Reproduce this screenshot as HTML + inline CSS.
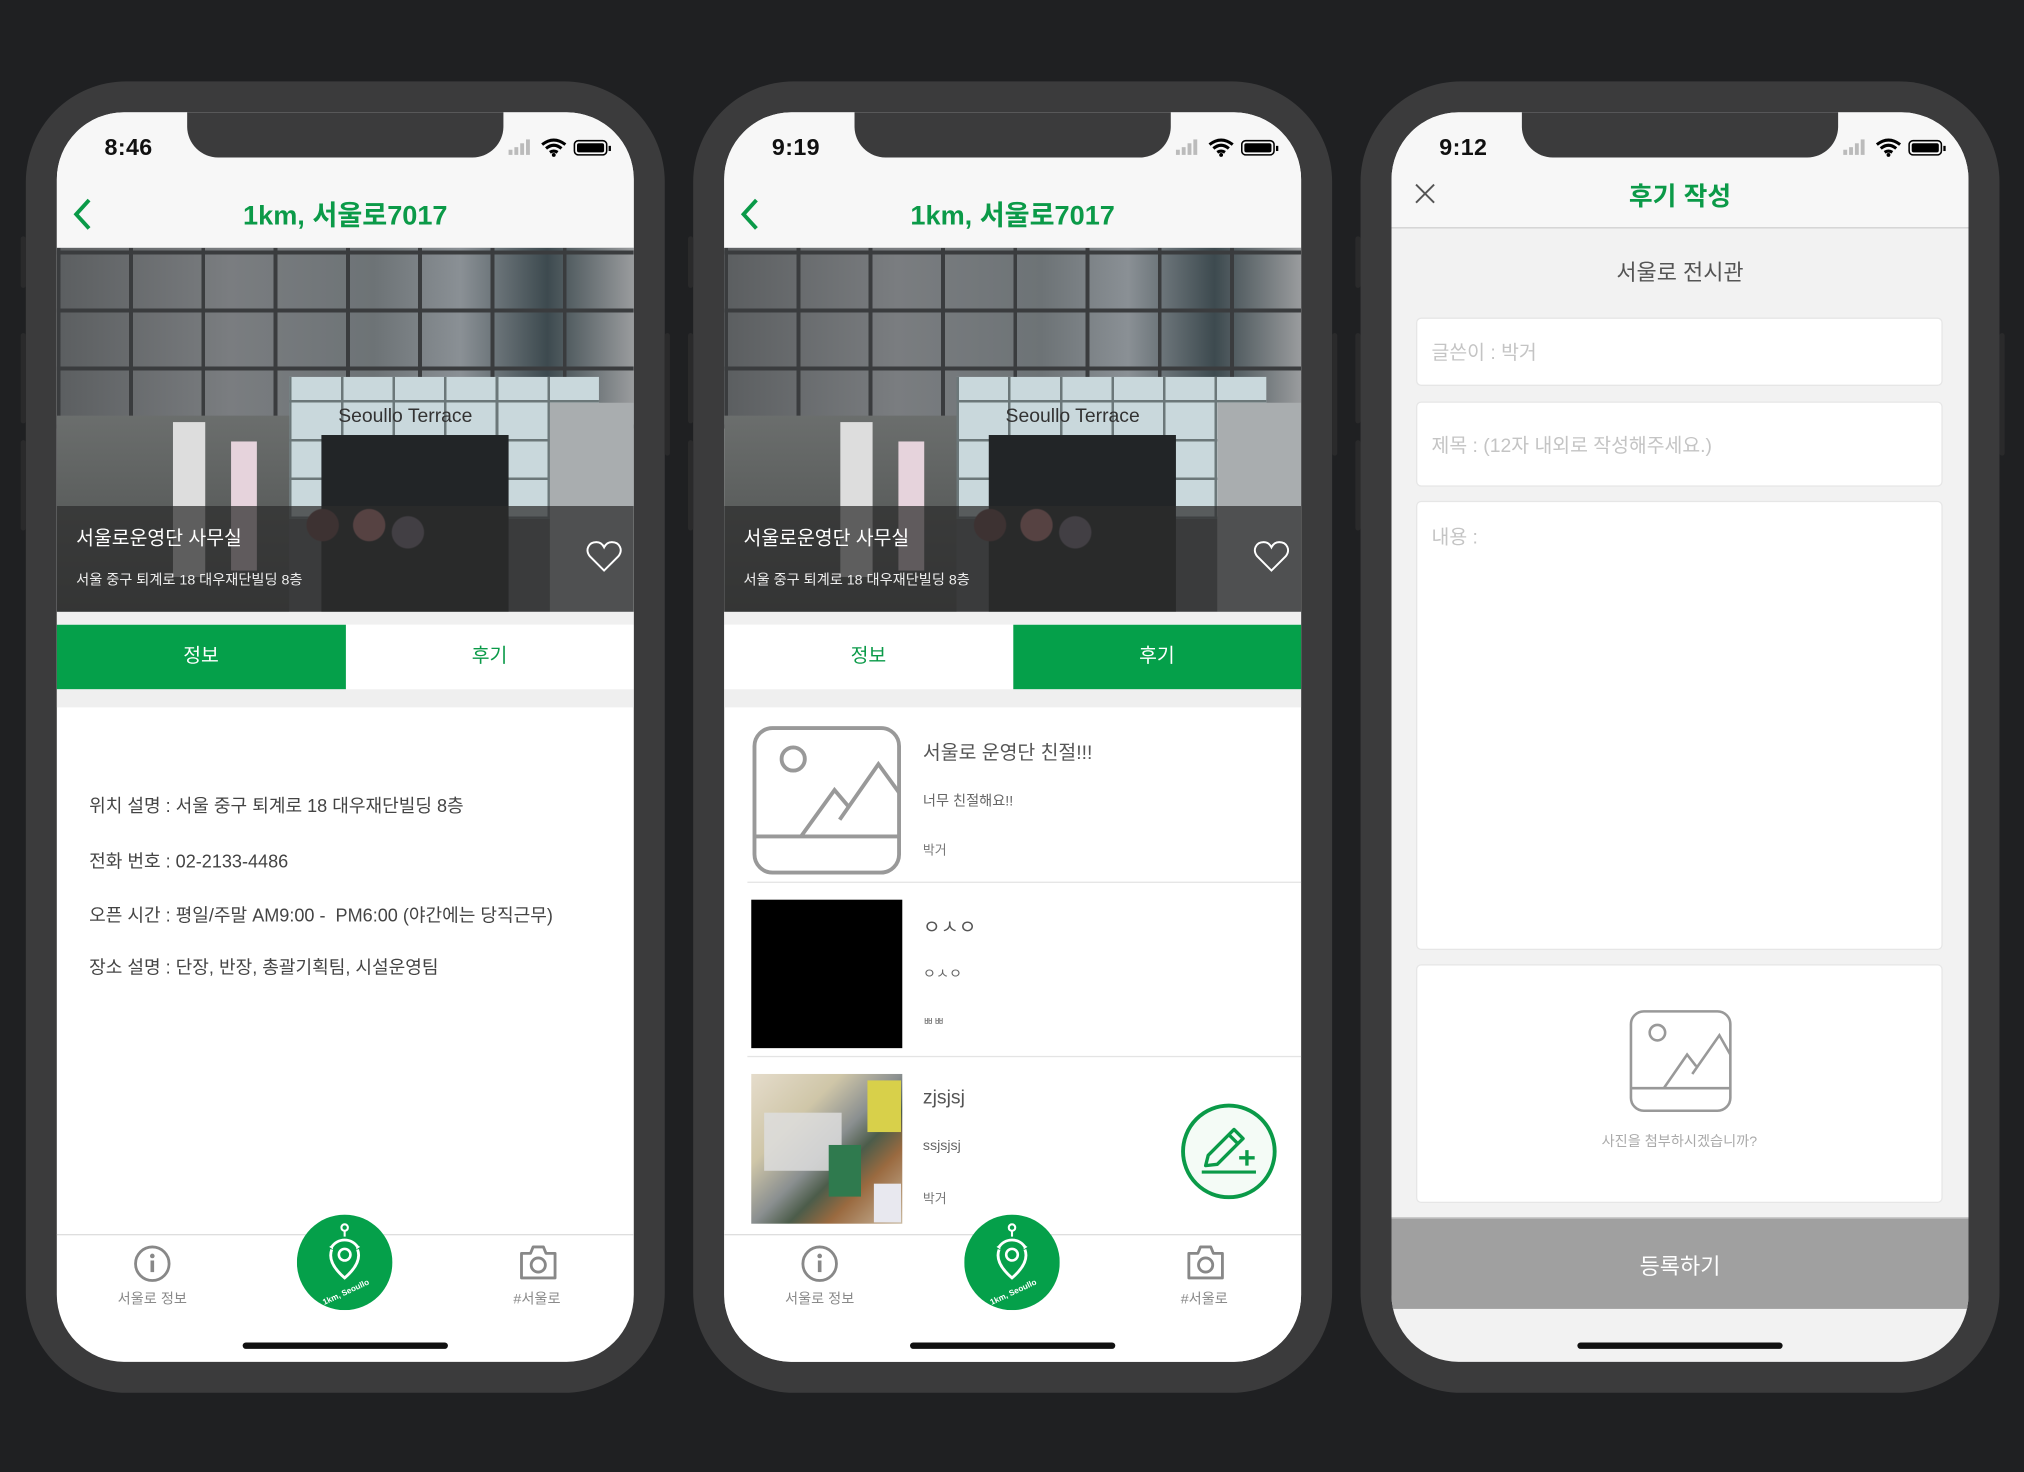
<!DOCTYPE html>
<html><head><meta charset="utf-8">
<style>
*{margin:0;padding:0;box-sizing:border-box}
html,body{width:2024px;height:1472px;overflow:hidden;background:#1f2022}
body{font-family:"Liberation Sans","Noto Sans CJK KR",sans-serif}
#wrap{position:absolute;left:0;top:0;width:1568px;height:1140px;transform:scale(1.29082);transform-origin:0 0;background:#1f2022}
.frame{position:absolute;top:63px;width:495px;height:1016px;border-radius:78px;background:#3b3b3c}
.btn{position:absolute;width:4px;background:#2a2a2b;border-radius:2px}
.screen{position:absolute;left:24px;top:24px;width:447px;height:968px;border-radius:52px;overflow:hidden;background:#fff}
.a{position:absolute}
.notch{position:absolute;left:101px;top:-2px;width:245px;height:37px;background:#3b3b3c;border-radius:0 0 24px 24px}
.time{position:absolute;left:37px;top:17px;font-size:18px;font-weight:bold;color:#111;letter-spacing:.3px}
.hdr{position:absolute;left:0;top:0;width:447px;height:105px;background:#f7f7f7}
.title{position:absolute;left:0;width:447px;text-align:center;color:#0b9a48;font-weight:bold;font-size:21px}
.green{color:#0a9a48}
.c{text-align:center}
.tab{position:absolute;top:397px;height:50px;width:223.5px;line-height:50px;text-align:center;font-size:15px}
.lbl{position:absolute;font-size:11px;color:#8a8a8a;text-align:center;width:100px}
.home{position:absolute;left:144px;top:953px;width:159px;height:5px;border-radius:3px;background:#111}
.box{position:absolute;left:19px;width:408px;background:#fff;border:1px solid #e6e6e6;border-radius:4px}
.ph{font-size:15px;color:#c4c4c4;position:absolute;left:11px}
</style></head><body><div id="wrap">

<!-- ===== PHONE 1 ===== -->
<div class="frame" style="left:20px">
<div class="btn" style="left:-4px;top:120px;height:40px"></div>
<div class="btn" style="left:-4px;top:195px;height:70px"></div>
<div class="btn" style="left:-4px;top:278px;height:70px"></div>
<div class="btn" style="right:-4px;top:195px;height:95px"></div>
<div class="screen">
 <div class="hdr"></div>
 <div class="notch"></div>
 <div class="time">8:46</div>
 <svg class="a" style="left:349px;top:19px" width="84" height="16" viewBox="0 0 84 16">
  <rect x="1" y="10" width="3" height="4" fill="#bbb"/><rect x="5.5" y="8" width="3" height="6" fill="#bbb"/><rect x="10" y="5" width="3" height="9" fill="#bbb"/><rect x="14.5" y="2" width="3" height="12" fill="#bbb"/>
  <path d="M27 6 Q36 -1 45 6 M30 9 Q36 4 42 9 M33 12 Q36 10 39 12" stroke="#000" stroke-width="2.4" fill="none"/><circle cx="36" cy="14" r="1.5"/>
  <rect x="52" y="3" width="25" height="11" rx="3" fill="none" stroke="#000" stroke-width="1.2"/><rect x="54" y="5" width="21" height="7" rx="1.5"/><rect x="78.5" y="7" width="1.8" height="4" fill="#000"/>
 </svg>
 <svg class="a" style="left:10px;top:66px" width="20" height="26"><path d="M15 2 L5 13 L15 24" stroke="#0a9a48" stroke-width="3" fill="none"/></svg>
 <div class="title" style="top:64px">1km, 서울로7017</div>
 <div class="a" style="left:0;top:105px;width:447px;height:282px;overflow:hidden;background:#5d6164">
  <div class="a" style="left:0;top:0;width:447px;height:140px;background:repeating-linear-gradient(90deg,#3a3c3e 0 3px,transparent 3px 56px),repeating-linear-gradient(0deg,#3a3c3e 0 3px,transparent 3px 45px),linear-gradient(90deg,#5b5e60,#7a7d80 30%,#6d7376 55%,#8a9095 70%,#3d4a4f 85%,#9a9c9e)"></div>
  <div class="a" style="left:180px;top:100px;width:240px;height:110px;background:repeating-linear-gradient(90deg,#6b7779 0 2px,transparent 2px 40px),repeating-linear-gradient(0deg,#6b7779 0 2px,transparent 2px 30px),#c9d8dc"></div>
  <div class="a" style="left:218px;top:122px;font-size:15px;color:#333;font-family:'Liberation Sans',sans-serif">Seoullo Terrace</div>
  <div class="a" style="left:205px;top:145px;width:145px;height:137px;background:#222527"></div>
  <div class="a" style="left:0;top:130px;width:180px;height:152px;background:linear-gradient(#6b6e6d,#4a4d4c)"></div>
  <div class="a" style="left:90px;top:135px;width:25px;height:120px;background:#ddd"></div>
  <div class="a" style="left:135px;top:150px;width:20px;height:100px;background:#e6d3dc"></div>
  <div class="a" style="left:382px;top:120px;width:65px;height:162px;background:#a9adaf"></div>
  <div class="a" style="left:170px;top:170px;width:120px;height:112px;background:radial-gradient(circle at 30% 40%,#6a4040 0 12px,transparent 13px),radial-gradient(circle at 60% 40%,#c07a7a 0 12px,transparent 13px),radial-gradient(circle at 85% 45%,#7c7080 0 12px,transparent 13px)"></div>
  <div class="a" style="left:0;top:200px;width:447px;height:82px;background:rgba(45,45,45,.72)"></div>
  <div class="a" style="left:15px;top:214px;font-size:15px;color:#fff">서울로운영단 사무실</div>
  <div class="a" style="left:15px;top:249px;font-size:11px;color:#eee">서울 중구 퇴계로 18 대우재단빌딩 8층</div>
  <svg class="a" style="left:410px;top:226px" width="28" height="26" viewBox="0 0 28 26"><path d="M14 24 L3 13 C-1 8 2 2 8 2 C11 2 13 4 14 6 C15 4 17 2 20 2 C26 2 29 8 25 13 Z" fill="none" stroke="#fff" stroke-width="1.5"/></svg>
 </div>
 <div class="a" style="left:0;top:387px;width:447px;height:10px;background:#f0f0f0"></div>
 <div class="tab" style="left:0;background:#05a04a;color:#fff">정보</div>
 <div class="tab green" style="left:223.5px;background:#fff">후기</div>
 <div class="a" style="left:0;top:447px;width:447px;height:14px;background:#efefef"></div>
 <div class="a" style="left:25px;top:527px;font-size:14px;color:#444;line-height:20px">위치 설명 : 서울 중구 퇴계로 18 대우재단빌딩 8층</div>
 <div class="a" style="left:25px;top:570px;font-size:14px;color:#444;line-height:20px">전화 번호 : 02-2133-4486</div>
 <div class="a" style="left:25px;top:612px;font-size:14px;color:#444;line-height:20px">오픈 시간 : 평일/주말 AM9:00 -&nbsp; PM6:00 (야간에는 당직근무)</div>
 <div class="a" style="left:25px;top:652px;font-size:14px;color:#444;line-height:20px">장소 설명 : 단장, 반장, 총괄기획팀, 시설운영팀</div>
 <div class="a" style="left:0;top:869px;width:447px;height:1px;background:#ddd"></div>
 <svg class="a" style="left:59px;top:877px" width="30" height="30" viewBox="0 0 30 30"><circle cx="15" cy="15" r="13" fill="none" stroke="#888" stroke-width="2.2"/><circle cx="15" cy="9" r="1.8" fill="#888"/><rect x="13.6" y="12.5" width="2.8" height="9" fill="#888"/></svg>
 <div class="lbl" style="left:24px;top:911px">서울로 정보</div>
 <svg class="a" style="left:357px;top:876px" width="32" height="30" viewBox="0 0 32 30"><path d="M3 8 H10 L12 3 H20 L22 8 H29 V27 H3 Z" fill="none" stroke="#888" stroke-width="2.2" stroke-linejoin="round"/><circle cx="16" cy="17" r="5.5" fill="none" stroke="#888" stroke-width="2.2"/></svg>
 <div class="lbl" style="left:322px;top:911px">#서울로</div>
 <svg class="a" style="left:186px;top:854px" width="74" height="74" viewBox="0 0 74 74"><circle cx="37" cy="37" r="37" fill="#05a04a"/><circle cx="37" cy="10" r="2.5" fill="none" stroke="#fff" stroke-width="1.6"/><line x1="37" y1="12.5" x2="37" y2="17" stroke="#fff" stroke-width="1.6"/><path d="M27 25 A12 12 0 0 1 47 25 M47 27 C50 35 44 43 37 49 C30 43 24 35 27 27" fill="none" stroke="#fff" stroke-width="2.2"/><path d="M25 25 L28 23 L28 27 Z M49 25 L46 23 L46 27 Z" fill="#fff"/><circle cx="37" cy="31" r="4.5" fill="none" stroke="#fff" stroke-width="2"/><text x="38" y="62" font-size="6.3" fill="#fff" text-anchor="middle" transform="rotate(-25 38 60)" font-family="Liberation Sans" font-weight="bold">1km, Seoullo</text></svg>
 <div class="home"></div>
</div></div>

<!-- ===== PHONE 2 ===== -->
<div class="frame" style="left:537px">
<div class="btn" style="left:-4px;top:120px;height:40px"></div>
<div class="btn" style="left:-4px;top:195px;height:70px"></div>
<div class="btn" style="left:-4px;top:278px;height:70px"></div>
<div class="btn" style="right:-4px;top:195px;height:95px"></div>
<div class="screen">
 <div class="hdr"></div>
 <div class="notch"></div>
 <div class="time">9:19</div>
 <svg class="a" style="left:349px;top:19px" width="84" height="16" viewBox="0 0 84 16">
  <rect x="1" y="10" width="3" height="4" fill="#bbb"/><rect x="5.5" y="8" width="3" height="6" fill="#bbb"/><rect x="10" y="5" width="3" height="9" fill="#bbb"/><rect x="14.5" y="2" width="3" height="12" fill="#bbb"/>
  <path d="M27 6 Q36 -1 45 6 M30 9 Q36 4 42 9 M33 12 Q36 10 39 12" stroke="#000" stroke-width="2.4" fill="none"/><circle cx="36" cy="14" r="1.5"/>
  <rect x="52" y="3" width="25" height="11" rx="3" fill="none" stroke="#000" stroke-width="1.2"/><rect x="54" y="5" width="21" height="7" rx="1.5"/><rect x="78.5" y="7" width="1.8" height="4" fill="#000"/>
 </svg>
 <svg class="a" style="left:10px;top:66px" width="20" height="26"><path d="M15 2 L5 13 L15 24" stroke="#0a9a48" stroke-width="3" fill="none"/></svg>
 <div class="title" style="top:64px">1km, 서울로7017</div>
 <div class="a" style="left:0;top:105px;width:447px;height:282px;overflow:hidden;background:#5d6164">
  <div class="a" style="left:0;top:0;width:447px;height:140px;background:repeating-linear-gradient(90deg,#3a3c3e 0 3px,transparent 3px 56px),repeating-linear-gradient(0deg,#3a3c3e 0 3px,transparent 3px 45px),linear-gradient(90deg,#5b5e60,#7a7d80 30%,#6d7376 55%,#8a9095 70%,#3d4a4f 85%,#9a9c9e)"></div>
  <div class="a" style="left:180px;top:100px;width:240px;height:110px;background:repeating-linear-gradient(90deg,#6b7779 0 2px,transparent 2px 40px),repeating-linear-gradient(0deg,#6b7779 0 2px,transparent 2px 30px),#c9d8dc"></div>
  <div class="a" style="left:218px;top:122px;font-size:15px;color:#333;font-family:'Liberation Sans',sans-serif">Seoullo Terrace</div>
  <div class="a" style="left:205px;top:145px;width:145px;height:137px;background:#222527"></div>
  <div class="a" style="left:0;top:130px;width:180px;height:152px;background:linear-gradient(#6b6e6d,#4a4d4c)"></div>
  <div class="a" style="left:90px;top:135px;width:25px;height:120px;background:#ddd"></div>
  <div class="a" style="left:135px;top:150px;width:20px;height:100px;background:#e6d3dc"></div>
  <div class="a" style="left:382px;top:120px;width:65px;height:162px;background:#a9adaf"></div>
  <div class="a" style="left:170px;top:170px;width:120px;height:112px;background:radial-gradient(circle at 30% 40%,#6a4040 0 12px,transparent 13px),radial-gradient(circle at 60% 40%,#c07a7a 0 12px,transparent 13px),radial-gradient(circle at 85% 45%,#7c7080 0 12px,transparent 13px)"></div>
  <div class="a" style="left:0;top:200px;width:447px;height:82px;background:rgba(45,45,45,.72)"></div>
  <div class="a" style="left:15px;top:214px;font-size:15px;color:#fff">서울로운영단 사무실</div>
  <div class="a" style="left:15px;top:249px;font-size:11px;color:#eee">서울 중구 퇴계로 18 대우재단빌딩 8층</div>
  <svg class="a" style="left:410px;top:226px" width="28" height="26" viewBox="0 0 28 26"><path d="M14 24 L3 13 C-1 8 2 2 8 2 C11 2 13 4 14 6 C15 4 17 2 20 2 C26 2 29 8 25 13 Z" fill="none" stroke="#fff" stroke-width="1.5"/></svg>
 </div>
 <div class="a" style="left:0;top:387px;width:447px;height:10px;background:#f0f0f0"></div>
 <div class="tab green" style="left:0;background:#fff">정보</div>
 <div class="tab" style="left:223.5px;background:#05a04a;color:#fff">후기</div>
 <div class="a" style="left:0;top:447px;width:447px;height:14px;background:#efefef"></div>
 <svg class="a" style="left:21px;top:475px" width="117" height="116" viewBox="0 0 116 116"><rect x="2" y="2" width="112" height="112" rx="14" fill="none" stroke="#999" stroke-width="3"/><line x1="2" y1="86" x2="114" y2="86" stroke="#999" stroke-width="3"/><circle cx="32" cy="26" r="9" fill="none" stroke="#999" stroke-width="3"/><path d="M38 86 L64 50 L75 63 M68 73 L98 30 L114 52" fill="none" stroke="#999" stroke-width="3"/></svg>
 <div class="a" style="left:154px;top:485px;font-size:15px;color:#555">서울로 운영단 친절!!!</div>
 <div class="a" style="left:154px;top:525px;font-size:11px;color:#666">너무 친절해요!!</div>
 <div class="a" style="left:154px;top:563px;font-size:10px;color:#777">박거</div>
 <div class="a" style="left:18px;top:596px;width:429px;height:1px;background:#e4e4e4"></div>
 <div class="a" style="left:21px;top:610px;width:117px;height:115px;background:#000"></div>
 <div class="a" style="left:154px;top:620px;font-size:15px;color:#555">ㅇㅅㅇ</div>
 <div class="a" style="left:154px;top:659px;font-size:11px;color:#666">ㅇㅅㅇ</div>
 <div class="a" style="left:154px;top:697px;font-size:9px;color:#777">ㅃㅃ</div>
 <div class="a" style="left:18px;top:731px;width:429px;height:1px;background:#e4e4e4"></div>
 <div class="a" style="left:21px;top:745px;width:117px;height:116px;background:linear-gradient(135deg,#e5dccb 0%,#cfc6a8 30%,#8a8f90 50%,#4c5c4a 62%,#9a6a40 75%,#c9b9a0 100%)">
  <div class="a" style="left:10px;top:30px;width:60px;height:45px;background:#ddd;opacity:.85"></div>
  <div class="a" style="left:60px;top:55px;width:25px;height:40px;background:#2f7a4e"></div>
  <div class="a" style="left:90px;top:5px;width:26px;height:40px;background:#d8d04a"></div>
  <div class="a" style="left:95px;top:85px;width:21px;height:30px;background:#e8e8ef"></div>
 </div>
 <div class="a" style="left:154px;top:755px;font-size:15px;color:#555">zjsjsj</div>
 <div class="a" style="left:154px;top:795px;font-size:11px;color:#666">ssjsjsj</div>
 <div class="a" style="left:154px;top:833px;font-size:10px;color:#777">박거</div>
 <svg class="a" style="left:353px;top:767px" width="76" height="76" viewBox="0 0 76 76"><circle cx="38" cy="38" r="35.5" fill="#f4fbf6" stroke="#0a9a48" stroke-width="3"/><path d="M20 49 L22 41 L42 21 L49 28 L29 48 Z M38 25 L45 32" fill="none" stroke="#0a9a48" stroke-width="2.6" stroke-linejoin="round"/><path d="M52 37 V49 M46 43 H58" stroke="#0a9a48" stroke-width="2.6"/><line x1="17" y1="54" x2="59" y2="54" stroke="#0a9a48" stroke-width="2.4"/></svg>
 <div class="a" style="left:0;top:866px;width:447px;height:102px;background:#fff"></div>
 <div class="a" style="left:0;top:869px;width:447px;height:1px;background:#ddd"></div>
 <svg class="a" style="left:59px;top:877px" width="30" height="30" viewBox="0 0 30 30"><circle cx="15" cy="15" r="13" fill="none" stroke="#888" stroke-width="2.2"/><circle cx="15" cy="9" r="1.8" fill="#888"/><rect x="13.6" y="12.5" width="2.8" height="9" fill="#888"/></svg>
 <div class="lbl" style="left:24px;top:911px">서울로 정보</div>
 <svg class="a" style="left:357px;top:876px" width="32" height="30" viewBox="0 0 32 30"><path d="M3 8 H10 L12 3 H20 L22 8 H29 V27 H3 Z" fill="none" stroke="#888" stroke-width="2.2" stroke-linejoin="round"/><circle cx="16" cy="17" r="5.5" fill="none" stroke="#888" stroke-width="2.2"/></svg>
 <div class="lbl" style="left:322px;top:911px">#서울로</div>
 <svg class="a" style="left:186px;top:854px" width="74" height="74" viewBox="0 0 74 74"><circle cx="37" cy="37" r="37" fill="#05a04a"/><circle cx="37" cy="10" r="2.5" fill="none" stroke="#fff" stroke-width="1.6"/><line x1="37" y1="12.5" x2="37" y2="17" stroke="#fff" stroke-width="1.6"/><path d="M27 25 A12 12 0 0 1 47 25 M47 27 C50 35 44 43 37 49 C30 43 24 35 27 27" fill="none" stroke="#fff" stroke-width="2.2"/><path d="M25 25 L28 23 L28 27 Z M49 25 L46 23 L46 27 Z" fill="#fff"/><circle cx="37" cy="31" r="4.5" fill="none" stroke="#fff" stroke-width="2"/><text x="38" y="62" font-size="6.3" fill="#fff" text-anchor="middle" transform="rotate(-25 38 60)" font-family="Liberation Sans" font-weight="bold">1km, Seoullo</text></svg>
 <div class="home"></div>
</div></div>

<!-- ===== PHONE 3 ===== -->
<div class="frame" style="left:1054px">
<div class="btn" style="left:-4px;top:120px;height:40px"></div>
<div class="btn" style="left:-4px;top:195px;height:70px"></div>
<div class="btn" style="left:-4px;top:278px;height:70px"></div>
<div class="btn" style="right:-4px;top:195px;height:95px"></div>
<div class="screen" style="background:#f2f2f2">
 <div class="a" style="left:0;top:0;width:447px;height:90px;background:#f7f7f7;border-bottom:1px solid #cfcfcf"></div>
 <div class="notch"></div>
 <div class="time">9:12</div>
 <svg class="a" style="left:349px;top:19px" width="84" height="16" viewBox="0 0 84 16">
  <rect x="1" y="10" width="3" height="4" fill="#bbb"/><rect x="5.5" y="8" width="3" height="6" fill="#bbb"/><rect x="10" y="5" width="3" height="9" fill="#bbb"/><rect x="14.5" y="2" width="3" height="12" fill="#bbb"/>
  <path d="M27 6 Q36 -1 45 6 M30 9 Q36 4 42 9 M33 12 Q36 10 39 12" stroke="#000" stroke-width="2.4" fill="none"/><circle cx="36" cy="14" r="1.5"/>
  <rect x="52" y="3" width="25" height="11" rx="3" fill="none" stroke="#000" stroke-width="1.2"/><rect x="54" y="5" width="21" height="7" rx="1.5"/><rect x="78.5" y="7" width="1.8" height="4" fill="#000"/>
 </svg>
 <svg class="a" style="left:18px;top:55px" width="16" height="16"><path d="M1 1 L15 15 M15 1 L1 15" stroke="#555" stroke-width="1.5"/></svg>
 <div class="title" style="top:49px;font-size:20px">후기 작성</div>
 <div class="a c" style="left:0;top:110px;width:447px;font-size:17px;color:#555">서울로 전시관</div>
 <div class="box" style="top:159px;height:53px"><div class="ph" style="top:15px">글쓴이 : 박거</div></div>
 <div class="box" style="top:224px;height:66px"><div class="ph" style="top:22px">제목 : (12자 내외로 작성해주세요.)</div></div>
 <div class="box" style="top:301px;height:348px"><div class="ph" style="top:16px">내용 :</div></div>
 <div class="box" style="top:660px;height:185px">
  <svg class="a" style="left:164px;top:34px" width="80" height="80" viewBox="0 0 80 80"><rect x="1.5" y="1.5" width="77" height="77" rx="10" fill="none" stroke="#999" stroke-width="2"/><line x1="1.5" y1="61" x2="78.5" y2="61" stroke="#999" stroke-width="2"/><circle cx="22" cy="18" r="6" fill="none" stroke="#999" stroke-width="2"/><path d="M27 61 L45 35 L52 44 M49 50 L70 20 L78.5 35" fill="none" stroke="#999" stroke-width="2"/></svg>
  <div class="a c" style="left:0;top:128px;width:406px;font-size:11px;color:#aaa">사진을 첨부하시겠습니까?</div>
 </div>
 <div class="a" style="left:0;top:856px;width:447px;height:71px;background:#a0a0a0;border-top:1px solid #ccc"></div>
 <div class="a c" style="left:0;top:880px;width:447px;font-size:17px;color:#fff">등록하기</div>
 <div class="home"></div>
</div></div>

</div></body></html>
